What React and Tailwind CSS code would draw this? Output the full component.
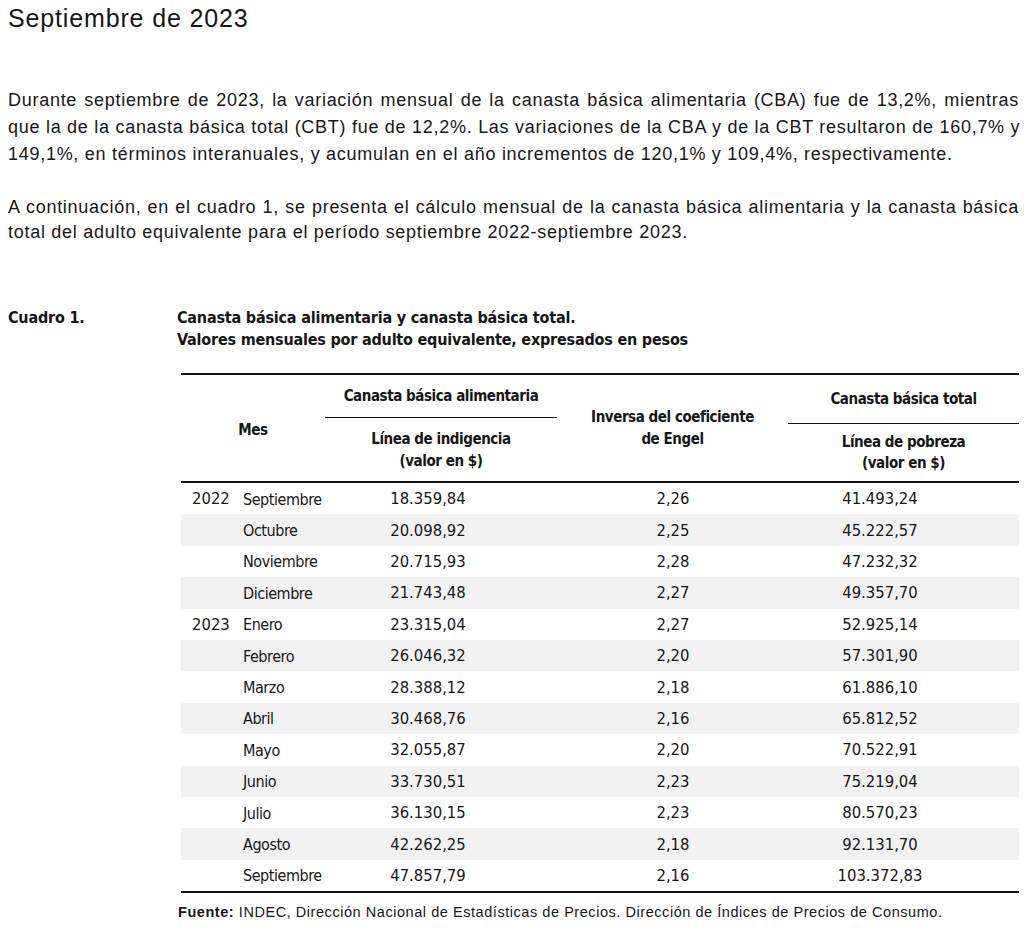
import React from "react";

const rows = [
  ["2022", "Septiembre", "18.359,84", "2,26", "41.493,24"],
  ["", "Octubre", "20.098,92", "2,25", "45.222,57"],
  ["", "Noviembre", "20.715,93", "2,28", "47.232,32"],
  ["", "Diciembre", "21.743,48", "2,27", "49.357,70"],
  ["2023", "Enero", "23.315,04", "2,27", "52.925,14"],
  ["", "Febrero", "26.046,32", "2,20", "57.301,90"],
  ["", "Marzo", "28.388,12", "2,18", "61.886,10"],
  ["", "Abril", "30.468,76", "2,16", "65.812,52"],
  ["", "Mayo", "32.055,87", "2,20", "70.522,91"],
  ["", "Junio", "33.730,51", "2,23", "75.219,04"],
  ["", "Julio", "36.130,15", "2,23", "80.570,23"],
  ["", "Agosto", "42.262,25", "2,18", "92.131,70"],
  ["", "Septiembre", "47.857,79", "2,16", "103.372,83"],
];

const cond =
  "font-['Liberation_Sans_Narrow','DejaVu_Sans_Condensed','Roboto_Condensed','Liberation_Sans',sans-serif] font-stretch-condensed";

const just = "whitespace-nowrap text-justify [text-align-last:justify]";

export default function App() {
  return (
    <div className="w-[1027px] h-[928px] bg-white text-[#161616] pl-[8px] pr-[8px] font-['Liberation_Sans',Arial,sans-serif] overflow-hidden">
      <h1 className="pt-[3px] text-[25px] leading-[30px] font-normal tracking-[0.85px]">Septiembre de 2023</h1>

      <div className="mt-[54px] text-[18px] leading-[27px] tracking-[0.72px] w-[1011px]">
        <div className={just}>
          Durante septiembre de 2023, la variación mensual de la canasta básica alimentaria (CBA) fue de 13,2%, mientras
        </div>
        <div className={just}>
          que la de la canasta básica total (CBT) fue de 12,2%. Las variaciones de la CBA y de la CBT resultaron de 160,7% y
        </div>
        <div className="whitespace-nowrap">
          149,1%, en términos interanuales, y acumulan en el año incrementos de 120,1% y 109,4%, respectivamente.
        </div>
      </div>

      <div className="mt-[27px] text-[18px] leading-[25px] tracking-[0.72px] w-[1011px]">
        <div className={just}>
          A continuación, en el cuadro 1, se presenta el cálculo mensual de la canasta básica alimentaria y la canasta básica
        </div>
        <div className="whitespace-nowrap">
          total del adulto equivalente para el período septiembre 2022-septiembre 2023.
        </div>
      </div>

      <div className={`mt-[62px] flex text-[16px] leading-[22px] font-bold tracking-[-0.2px] ${cond}`}>
        <div className="w-[169px]">Cuadro 1.</div>
        <div>
          <div>Canasta básica alimentaria y canasta básica total.</div>
          <div>Valores mensuales por adulto equivalente, expresados en pesos</div>
        </div>
      </div>

      <div className={`ml-[173px] mt-[22px] ${cond}`}>
        <div className="h-[2px] bg-[#111]" />
        <div className="grid grid-cols-[144px_232px_231px_1fr] h-[106px] text-[15px] font-bold text-center tracking-[-0.45px]">
          <div className="flex items-center justify-center pt-[4px]">Mes</div>
          <div className="flex flex-col">
            <div className="mt-[11px] leading-[20px]">Canasta básica alimentaria</div>
            <div className="mt-[11px] h-[1px] bg-[#111]" />
            <div className="mt-[10px] leading-[22px]">
              Línea de indigencia
              <br />
              (valor en $)
            </div>
          </div>
          <div className="flex items-center justify-center leading-[22px]">
            <div>
              Inversa del coeficiente
              <br />
              de Engel
            </div>
          </div>
          <div className="flex flex-col">
            <div className="mt-[14px] leading-[20px]">Canasta básica total</div>
            <div className="mt-[14px] h-[1px] bg-[#111]" />
            <div className="mt-[8px] leading-[21px]">
              Línea de pobreza
              <br />
              (valor en $)
            </div>
          </div>
        </div>
        <div className="h-[2px] bg-[#111]" />
        <div className="text-[16.5px]">
          {rows.map((r, i) => (
            <div
              key={i}
              className={`grid grid-cols-[59px_90px_196px_294px_120px_1fr] h-[31.4px] items-center pt-[2px] ${
                i % 2 === 1 ? "bg-[#f2f2f2]" : "bg-white"
              }`}
            >
              <div className="pl-[11px]">{r[0]}</div>
              <div className="pl-[3px] text-[16px] tracking-[-0.45px]">{r[1]}</div>
              <div className="text-center">{r[2]}</div>
              <div className="text-center">{r[3]}</div>
              <div className="text-center">{r[4]}</div>
              <div />
            </div>
          ))}
        </div>
        <div className="h-[2px] bg-[#111]" />
        <div className="mt-[11px] -ml-[3px] text-[14.5px] leading-[16px] tracking-[0.55px] font-['Liberation_Sans',Arial,sans-serif] font-stretch-normal whitespace-nowrap">
          <span className="font-bold">Fuente:</span> INDEC, Dirección Nacional de Estadísticas de Precios. Dirección de Índices de Precios de Consumo.
        </div>
      </div>
    </div>
  );
}
